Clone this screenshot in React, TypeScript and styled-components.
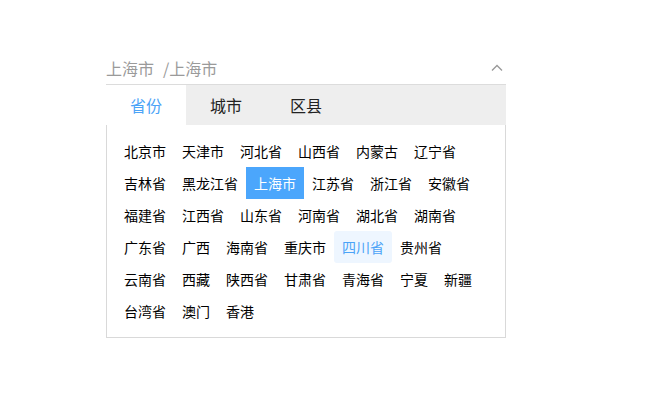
import React, { useState } from 'react';
import styled, { createGlobalStyle } from 'styled-components';

const GlobalStyle = createGlobalStyle`
  html, body {
    margin: 0;
    padding: 0;
    background: #fff;
    font-family: "Noto Sans CJK SC", "Noto Sans", sans-serif;
  }
`;

const Wrapper = styled.div`
  width: 400px;
  margin: 54px 0 0 106px;
`;

const Header = styled.div`
  height: 31px;
  padding-bottom: 3px;
  box-sizing: border-box;
  display: flex;
  align-items: center;
  justify-content: space-between;
  border-bottom: 1px solid #dcdcdc;
  font-size: 16px;
  color: #9a9a9a;
`;

const Path = styled.span`
  margin-left: 9px;
`;

const Chevron = styled.svg`
  width: 12px;
  height: 8px;
  margin-right: 3px;
`;

const TabBar = styled.div`
  display: flex;
  height: 40px;
  background: #eeeeee;
`;

const Tab = styled.div<{ $active?: boolean }>`
  width: 80px;
  display: flex;
  align-items: center;
  justify-content: center;
  font-size: 16px;
  cursor: pointer;
  background: ${p => (p.$active ? '#fff' : 'transparent')};
  color: ${p => (p.$active ? '#4ba3f7' : '#222')};
`;

const Panel = styled.div`
  border: 1px solid #d9d9d9;
  border-top: none;
  padding: 10px 10px 10px 9px;
  display: flex;
  flex-wrap: wrap;
  align-content: flex-start;
`;

const Item = styled.span<{ $state?: 'selected' | 'hover' }>`
  height: 32px;
  line-height: 32px;
  padding: 0 8px;
  font-size: 14px;
  white-space: nowrap;
  cursor: pointer;
  color: ${p => (p.$state === 'selected' ? '#fff' : p.$state === 'hover' ? '#4ba3f7' : '#000')};
  background: ${p => (p.$state === 'selected' ? '#4ba6fc' : p.$state === 'hover' ? '#eef6ff' : 'transparent')};
  border-radius: ${p => (p.$state === 'hover' ? '3px' : '0')};
`;

const RowBreak = styled.div`
  flex-basis: 100%;
  height: 0;
`;

const provinces = [
  '北京市', '天津市', '河北省', '山西省', '内蒙古', '辽宁省',
  '吉林省', '黑龙江省', '上海市', '江苏省', '浙江省', '安徽省',
  '福建省', '江西省', '山东省', '河南省', '湖北省', '湖南省',
  '广东省', '广西', '海南省', '重庆市', '四川省', '贵州省',
  '云南省', '西藏', '陕西省', '甘肃省', '青海省', '宁夏', '新疆',
  '台湾省', '澳门', '香港',
];

const rowBreaks = new Set(['吉林省', '福建省', '广东省', '云南省', '台湾省']);

export default function App() {
  const [tab, setTab] = useState(0);
  const selected = '上海市';
  const hovered = '四川省';

  return (
    <>
      <GlobalStyle />
      <Wrapper>
        <Header>
          <span>
            上海市<Path>/上海市</Path>
          </span>
          <Chevron viewBox="0 0 12 8">
            <path d="M1 6.5 L6 1.5 L11 6.5" fill="none" stroke="#999" strokeWidth="1.3" />
          </Chevron>
        </Header>
        <TabBar>
          {['省份', '城市', '区县'].map((t, i) => (
            <Tab key={t} $active={tab === i} onClick={() => setTab(i)}>{t}</Tab>
          ))}
        </TabBar>
        <Panel>
          {provinces.map(p => (
            <React.Fragment key={p}>
              {rowBreaks.has(p) && <RowBreak />}
              <Item $state={p === selected ? 'selected' : p === hovered ? 'hover' : undefined}>{p}</Item>
            </React.Fragment>
          ))}
        </Panel>
      </Wrapper>
    </>
  );
}
